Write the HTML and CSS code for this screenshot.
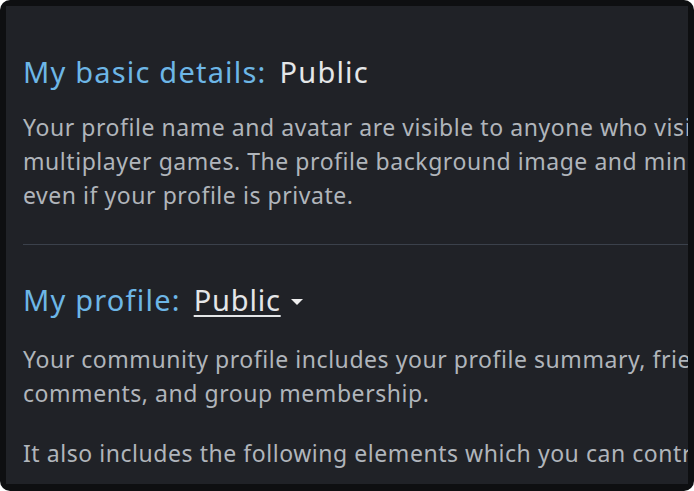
FILE: index.html
```html
<!DOCTYPE html>
<html>
  <head>
    <link rel="stylesheet" href="styles.css">
  </head>
  <body>
    <div class="frame">
      <div class="panel">
        <section class="privacy-block">
          <h2 class="setting">
            <span class="setting-label">My basic details:</span>
            <span class="setting-value">Public</span>
          </h2>
          <p class="desc">
            <span class="line">Your profile name and avatar are visible to anyone who visits your profile,</span>
            <span class="line">multiplayer games. The profile background image and mini profile are also visible</span>
            <span class="line">even if your profile is private.</span>
          </p>
        </section>

        <hr class="divider" />

        <section class="privacy-block">
          <h2 class="setting">
            <span class="setting-label">My profile:</span>
            <span class="setting-value dropdown">Public</span>
            <span class="caret"></span>
          </h2>
          <p class="desc">
            <span class="line">Your community profile includes your profile summary, friends list, badges,</span>
            <span class="line">comments, and group membership.</span>
          </p>
          <p class="desc desc-next">
            <span class="line">It also includes the following elements which you can control separately:</span>
          </p>
        </section>
      </div>
    </div>
  </body>
</html>
```

FILE: styles.css
```css
html,
body {
  margin: 0;
  padding: 0;
  background: #ffffff;
}

body {
  font-family: "Noto Sans", "Open Sans", sans-serif;
}

.frame {
  width: 694px;
  height: 491px;
  box-sizing: border-box;
  padding: 6px 6px 7px 6px;
  background: #0e0f11;
  border-radius: 10px;
}

.panel {
  height: 100%;
  box-sizing: border-box;
  padding: 46px 0 0 17px;
  background: #202227;
  overflow: hidden;
}

.setting {
  display: flex;
  align-items: center;
  margin: 0;
  font-size: 29px;
  font-weight: 400;
  line-height: 40px;
  letter-spacing: 1.2px;
  white-space: nowrap;
}

.setting-label {
  color: #6db6e6;
  margin-right: 13px;
}

.setting-value {
  color: #e4e6e8;
}

.dropdown {
  letter-spacing: 0.8px;
  text-decoration: underline;
  text-decoration-thickness: 2px;
  text-underline-offset: 4px;
}

.caret {
  width: 0;
  height: 0;
  margin-left: 10px;
  margin-top: 4px;
  border-left: 6px solid transparent;
  border-right: 6px solid transparent;
  border-top: 6px solid #eeeeee;
}

.desc {
  margin: 18px 0 0;
  font-size: 23px;
  line-height: 34px;
  letter-spacing: 0.55px;
  color: #b0b5bb;
}

.desc .line {
  display: block;
  white-space: nowrap;
}

.privacy-block + .divider + .privacy-block .setting {
  margin-top: 35px;
}

.privacy-block + .divider + .privacy-block .desc {
  margin-top: 22px;
}

.privacy-block + .divider + .privacy-block .desc-next {
  margin-top: 26px;
}

.divider {
  margin: 32px 0 0;
  border: none;
  height: 1px;
  background: #3b414b;
}
```
